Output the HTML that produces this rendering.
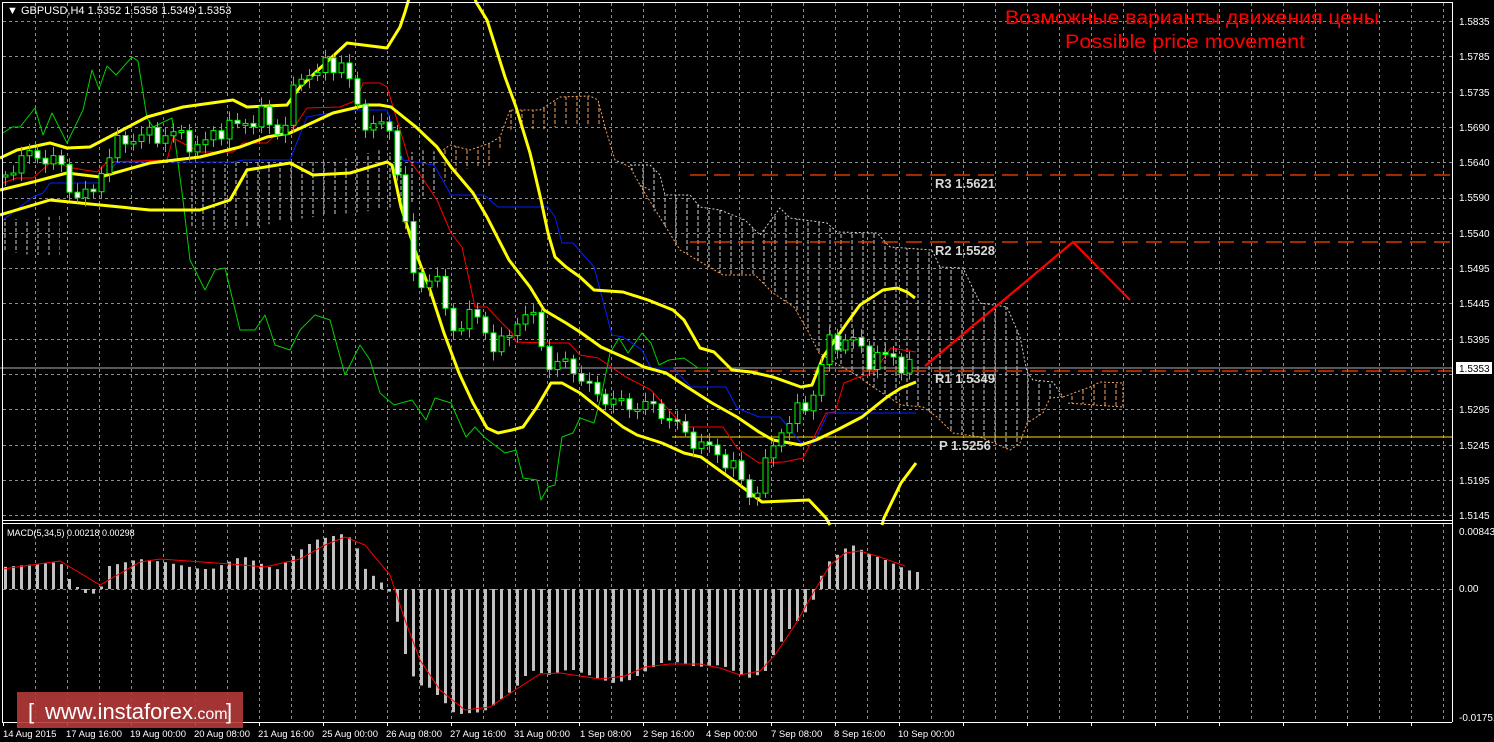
<!DOCTYPE html>
<html><head><meta charset="utf-8"><style>
html,body{margin:0;padding:0;background:#000;}
svg{display:block}
text{font-family:"Liberation Sans",sans-serif;}
</style></head><body>
<svg id="c" width="1494" height="742" viewBox="0 0 1494 742" xmlns="http://www.w3.org/2000/svg">
<defs>
<pattern id="hg" width="11" height="6" patternUnits="userSpaceOnUse"><line x1="5" y1="0" x2="5" y2="4" stroke="#d0d0d0" stroke-width="1"/></pattern>
<pattern id="ho" width="11" height="6" patternUnits="userSpaceOnUse"><line x1="5" y1="0" x2="5" y2="4" stroke="#f4a460" stroke-width="1"/></pattern>
</defs>
<rect width="1494" height="742" fill="#000"/>
<g id="grid" stroke="#8c8c8c" stroke-width="1" stroke-dasharray="3,3"></g>
<g id="cloud">
<polygon points="0,218 30,220 60,215 60,255 30,255 0,250" fill="url(#hg)"/>
<polygon points="190,170 250,160 300,160 340,160 380,150 400,155 420,150 440,152 440,190 420,200 400,205 380,210 330,215 290,220 250,228 210,230 190,228" fill="url(#hg)"/>
<polygon points="440,152 450,145 470,150 490,143 500,137 510,110 540,110 560,97 590,96 598,100 605,127 600,126 560,126 540,130 520,127 510,130 500,148 490,168 470,168 450,172 440,190" fill="url(#ho)"/>
<polyline points="440,152 450,145 470,150 490,143 500,137 510,110 540,110 560,97 590,96 598,100 605,127 615,160 630,167 640,185 650,190" fill="none" stroke="#f4a460" stroke-dasharray="2,2"/>
<polygon points="630,165 650,165 660,175 665,195 690,195 700,207 720,210 745,220 760,235 780,208 790,218 827,223 837,232 877,233 890,247 932,250 940,267 963,268 980,303 1007,307 1020,337 1027,372 1033,380 1053,382 1063,397 1050,398 1043,413 1027,423 1020,443 1010,450 980,437 953,433 937,417 923,407 901,405 873,387 859,377 819,353 809,333 794,307 773,293 755,275 723,275 680,250 660,220 640,190" fill="url(#hg)"/>
<polyline points="630,165 650,165 660,175 665,195 690,195 700,207 720,210 745,220 760,235 780,208 790,218 827,223 837,232 877,233 890,247 932,250 940,267 963,268 980,303 1007,307 1020,337 1027,372 1033,380 1053,382 1063,397" fill="none" stroke="#d0d0d0" stroke-dasharray="2,2"/>
<polyline points="640,185 680,250 723,275 755,275 773,293 794,307 809,333 819,353 859,377 873,387 901,405 923,407 937,417 953,433 980,437 1010,450 1020,443 1027,423 1043,413 1050,398 1063,397" fill="none" stroke="#f4a460" stroke-dasharray="2,2"/>
<polygon points="1063,397 1090,387 1100,382 1123,383 1123,407 1067,403" fill="url(#ho)"/>
<polyline points="1063,397 1090,387 1100,382 1123,383 1123,407 1067,403" fill="none" stroke="#f4a460" stroke-dasharray="2,2"/>
</g>
<line x1="690" y1="175" x2="1452" y2="175" stroke="#ff4500" stroke-width="1.3" stroke-dasharray="16,8"/>
<line x1="690" y1="242" x2="1452" y2="242" stroke="#ff4500" stroke-width="1.3" stroke-dasharray="16,8"/>
<line x1="670" y1="371" x2="1452" y2="371" stroke="#ff4500" stroke-width="1.3" stroke-dasharray="16,8"/>
<line x1="672" y1="437" x2="1452" y2="437" stroke="#ffd700" stroke-width="1"/>
<line x1="0" y1="368" x2="1452" y2="368" stroke="#a8b0b8" stroke-width="1"/>
<g font-family="Liberation Mono,monospace" font-weight="bold" font-size="13" fill="#d8d8d8">
<text x="935" y="188">R3 1.5621</text>
<text x="935" y="255">R2 1.5528</text>
<text x="935" y="383">R1 1.5349</text>
<text x="939" y="450">P 1.5256</text>
</g>
<g id="lines" fill="none"></g>
<g id="candles"></g>
<g id="macd"></g>
<polyline points="925,366 1073,242 1130,300" fill="none" stroke="#ff0000" stroke-width="2.2"/>
<text x="1192" y="24" text-anchor="middle" font-size="19" fill="#ff0000" textLength="374" lengthAdjust="spacingAndGlyphs">Возможные варианты движения цены</text>
<text x="1185" y="48" text-anchor="middle" font-size="19" fill="#ff0000" textLength="240" lengthAdjust="spacingAndGlyphs">Possible price movement</text>
<g stroke="#ffffff" stroke-width="1" fill="none">
<line x1="2" y1="2.5" x2="1452" y2="2.5"/>
<line x1="2.5" y1="2" x2="2.5" y2="722"/>
<line x1="1452.5" y1="2" x2="1452.5" y2="722"/>
<line x1="2" y1="520.5" x2="1452" y2="520.5"/>
<line x1="2" y1="523.5" x2="1452" y2="523.5"/>
<line x1="2" y1="722.5" x2="1452" y2="722.5"/>
</g>
<text x="7" y="14" font-size="11" fill="#ffffff">▼ GBPUSD,H4  1.5352 1.5358 1.5349 1.5353</text>
<text x="7" y="536" font-size="9" fill="#ffffff">MACD(5,34,5) 0.00218 0.00298</text>
<g font-size="10" fill="#ffffff">
<text x="1459" y="25">1.5835</text><text x="1459" y="60">1.5785</text><text x="1459" y="96">1.5735</text>
<text x="1459" y="131">1.5690</text><text x="1459" y="166">1.5640</text><text x="1459" y="201">1.5590</text>
<text x="1459" y="237">1.5540</text><text x="1459" y="272">1.5495</text><text x="1459" y="307">1.5445</text>
<text x="1459" y="343">1.5395</text><text x="1459" y="413">1.5295</text>
<text x="1459" y="449">1.5245</text><text x="1459" y="484">1.5195</text><text x="1459" y="519">1.5145</text>
<text x="1459" y="535">0.00843</text><text x="1459" y="592">0.00</text><text x="1459" y="721">-0.01751</text>
</g>
<rect x="1456" y="362" width="36" height="12" fill="#ffffff"/>
<text x="1459" y="372" font-size="10" fill="#000">1.5353</text>
<g font-size="9.5" fill="#ffffff">
<text x="3" y="737">14 Aug 2015</text><text x="66" y="737">17 Aug 16:00</text><text x="130" y="737">19 Aug 00:00</text>
<text x="194" y="737">20 Aug 08:00</text><text x="258" y="737">21 Aug 16:00</text><text x="322" y="737">25 Aug 00:00</text>
<text x="386" y="737">26 Aug 08:00</text><text x="450" y="737">27 Aug 16:00</text><text x="514" y="737">31 Aug 00:00</text>
<text x="580" y="737">1 Sep 08:00</text><text x="643" y="737">2 Sep 16:00</text><text x="706" y="737">4 Sep 00:00</text>
<text x="771" y="737">7 Sep 08:00</text><text x="834" y="737">8 Sep 16:00</text><text x="898" y="737">10 Sep 00:00</text>
</g>
<g id="ticks" stroke="#fff"></g>
<rect x="17" y="692" width="226" height="36" fill="#b53a3a" fill-opacity="0.9"/>
<text x="28" y="719" font-size="22" fill="#ffffff">[</text>
<text x="45" y="719" font-size="22" fill="#ffffff">www.instaforex<tspan font-size="16">.com</tspan></text>
<text x="226" y="719" font-size="22" fill="#ffffff">]</text>
</svg>
<script>
(function(){
var NS="http://www.w3.org/2000/svg";
function el(p,t,a){var e=document.createElementNS(NS,t);for(var k in a)e.setAttribute(k,a[k]);p.appendChild(e);return e;}
var g=document.getElementById('grid');
for(var x=35;x<1450;x+=32){el(g,'line',{x1:x+.5,y1:3,x2:x+.5,y2:520});el(g,'line',{x1:x+.5,y1:524,x2:x+.5,y2:722});}
for(var k=0;k<15;k++){var y=Math.round(21+35.3*k)+.5;el(g,'line',{x1:3,y1:y,x2:1452,y2:y});}
el(g,'line',{x1:3,y1:589.5,x2:1452,y2:589.5});
var tk=document.getElementById('ticks');
for(var x=3;x<1450;x+=64){el(tk,'line',{x1:x+.5,y1:722,x2:x+.5,y2:726});}
var L=document.getElementById('lines');
function pl(pts,col,w){el(L,'polyline',{points:pts,stroke:col,'stroke-width':w,fill:'none','stroke-linejoin':'round'});}
pl("3,133 12,127 20,127 35,108 43,135 52,113 67,143 83,110 92,70 99,89 107,66 116,75 132,57 138,61 147,118 153,127 172,118 183,200 190,260 205,290 215,270 225,268 240,330 255,330 265,315 275,345 290,350 300,330 315,315 330,320 345,375 360,345 370,360 380,393 394,405 412,400 426,420 435,398 451,403 466,437 475,427 484,437 505,453 516,450 523,478 537,480 541,500 548,487 555,485 562,437 573,433 580,418 594,423 601,397 610,353 619,338 628,353 642,333 651,343 659,365 669,360 684,358 698,368 707,368","#00d000",1);
pl("3,183 17,178 33,178 50,163 60,163 67,167 97,172 107,162 167,160 173,138 200,152 233,152 243,143 267,143 283,127 290,133 307,108 340,107 357,100 363,83 380,83 387,87 401,133 409,160 419,173 437,200 451,233 462,247 475,307 487,307 501,322 512,333 516,342 548,343 569,343 580,355 598,358 626,377 651,390 666,407 684,427 723,427 737,448 759,463 784,462 803,458 814,437 826,413 835,412 844,383 859,377 873,373 891,348 916,352","#ff0000",1);
pl("3,220 33,197 43,193 50,183 100,183 117,162 233,162 243,160 290,160 307,117 347,110 387,110 403,160 434,165 451,195 484,195 498,207 548,207 555,217 562,243 573,243 594,267 612,335 623,337 642,350 651,368 673,368 691,387 726,387 737,408 759,417 780,417 801,443 814,443 828,413 916,413","#0020ff",1);
pl("0,158 17,150 50,143 67,148 90,147 147,117 183,107 233,100 247,107 287,105 300,87 347,43 387,48 400,27 405,12 410,-5","#ffff00",3);
pl("474,-5 476,2 487,20 505,77 516,107 530,153 541,200 548,233 555,257 566,267 580,277 594,290 623,292 648,300 673,310 684,320 700,348 714,352 732,370 751,372 773,377 801,387 812,385 823,357 847,323 860,305 883,290 897,288 907,292 915,298","#ffff00",3);
pl("0,190 33,182 67,173 100,177 150,163 200,157 240,147 267,137 290,133 333,113 367,105 380,105 391,107 416,127 437,147 451,167 473,193 487,217 509,260 530,287 544,310 566,323 580,332 601,347 630,360 644,367 666,373 687,387 712,403 737,417 759,432 773,440 801,445 816,440 837,430 862,417 887,397 901,388 916,382","#ffff00",3);
pl("0,215 50,200 100,205 150,210 200,210 230,200 247,170 290,163 313,175 350,173 387,162 392,165 401,207 416,253 430,290 444,333 459,373 473,403 487,428 498,433 512,430 523,427 537,407 551,383 562,383 580,393 601,410 623,427 637,435 662,443 684,453 701,457 719,470 737,483 762,502 809,500 826,518 830,525","#ffff00",3);
pl("882,525 884,518 901,483 916,463","#ffff00",3);
var kp=[[5,175],[20,158],[40,155],[60,165],[70,190],[90,200],[100,170],[120,140],[150,135],[180,135],[200,150],[215,130],[240,125],[260,115],[280,135],[300,75],[320,70],[345,60],[355,110],[370,125],[385,125],[395,150],[402,200],[410,270],[420,290],[430,270],[440,290],[450,330],[465,320],[480,315],[495,355],[510,330],[520,315],[535,320],[550,370],[570,360],[580,380],[590,390],[600,395],[620,405],[640,405],[660,410],[680,430],[700,445],[720,455],[735,470],[748,495],[760,485],[770,450],[780,430],[790,420],[810,400],[818,380],[825,345],[840,340],[855,340],[865,360],[880,355],[900,362],[910,367]];
function iy(x){for(var i=1;i<kp.length;i++){if(x<=kp[i][0]){var a=kp[i-1],b=kp[i];return a[1]+(b[1]-a[1])*(x-a[0])/(b[0]-a[0]);}}return kp[kp.length-1][1];}
var C=document.getElementById('candles');var prev=iy(5);
for(var i=0;i<114;i++){var x=5+8*i;if(x>912)break;var c=iy(x)+7*Math.sin(i*1.7)+4*Math.sin(i*3.1);
var o=prev;var top=Math.min(o,c),bot=Math.max(o,c);if(bot-top<2){bot=top+2;}
var wt=top-4-5*Math.abs(Math.sin(i*2.3)),wb=bot+4+5*Math.abs(Math.cos(i*1.9));
el(C,'line',{x1:x+.5,y1:wt,x2:x+.5,y2:wb,stroke:'#00ff00','stroke-width':1});
el(C,'rect',{x:x-2,y:top,width:5,height:bot-top,fill:(c>o?'#ffffff':'#000000'),stroke:'#00ff00','stroke-width':1});
prev=c;}
var mk=[[3,22],[60,27],[67,12],[82,-3],[91,-6],[100,0],[109,23],[139,30],[164,27],[200,20],[212,20],[242,33],[276,19],[300,39],[315,49],[342,55],[354,49],[364,21],[379,8],[388,1],[395,-24],[403,-59],[412,-86],[419,-96],[430,-99],[444,-113],[452,-123],[460,-125],[482,-123],[491,-118],[515,-99],[530,-81],[548,-86],[570,-80],[612,-94],[630,-91],[651,-79],[667,-71],[697,-78],[721,-76],[748,-89],[764,-84],[773,-66],[788,-41],[803,-26],[812,-14],[819,9],[827,26],[844,40],[852,44],[867,36],[885,29],[907,19],[916,17]];
function im(x){for(var i=1;i<mk.length;i++){if(x<=mk[i][0]){var a=mk[i-1],b=mk[i];return a[1]+(b[1]-a[1])*(x-a[0])/(b[0]-a[0]);}}return 17;}
var M=document.getElementById('macd');
for(var x=5;x<=917;x+=8){var h=im(x);var y0=589;el(M,'rect',{x:x-1,y:h>0?y0-h:y0,width:3,height:Math.max(1,Math.abs(h)),fill:'#c0c0c0'});}
el(M,'polyline',{points:"3,569 60,561 100,585 140,562 160,559 230,564 265,567 300,559 325,545 345,537 365,545 390,575 405,620 420,660 440,690 465,710 490,707 515,690 540,674 560,673 580,676 600,679 625,676 645,667 670,664 700,664 720,668 740,675 760,671 775,655 795,625 815,590 830,565 845,553 860,551 880,557 905,566",fill:'none',stroke:'#ff0000','stroke-width':1});
})();
</script>
</body></html>
